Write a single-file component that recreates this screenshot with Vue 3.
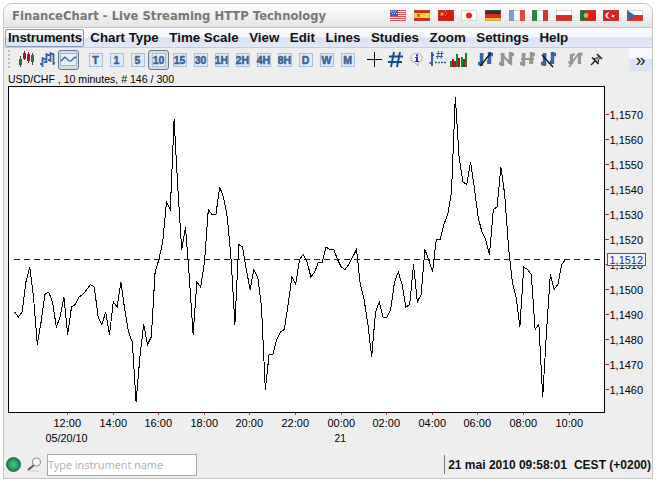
<template>
  <div class="window">
    <header class="title-bar">
      <h1>FinanceChart - Live Streaming HTTP Technology</h1>
      <div class="flags">
        <svg v-for="flag in flags" :key="flag.name" class="flag" width="16" height="11" viewBox="0 0 16 11">
          <rect v-for="(r, i) in flag.rects" :key="i" :x="r[0]" :y="r[1]" :width="r[2]" :height="r[3]" :fill="r[4]" />
          <circle v-if="flag.dot" :cx="flag.dot[0]" :cy="flag.dot[1]" :r="flag.dot[2]" :fill="flag.dot[3]" />
          <path v-if="flag.path" :d="flag.path[0]" :fill="flag.path[1]" />
          <rect x="0.5" y="0.5" width="15" height="10" fill="none" stroke="#777" stroke-opacity="0.3" />
        </svg>
      </div>
    </header>

    <nav class="menu">
      <span v-for="(item, i) in menu" :key="item" class="menu-item" :class="{ active: i === 0 }">{{ item }}</span>
    </nav>

    <div class="toolbar">
      <div class="grip"></div>
      <div class="group">
        <span class="tool">
          <svg width="17" height="17" viewBox="0 0 17 17">
            <path d="M2.5 5v11M14.5 2v12" stroke="#444" />
            <path d="M6.5 0v9M10.5 1v11" stroke="#533" />
            <rect x="1" y="8" width="3" height="6" fill="#1d7a2c" />
            <rect x="5" y="2" width="3" height="6" fill="#9c1c28" />
            <rect x="9" y="3" width="3" height="7" fill="#9c1c28" />
            <rect x="13" y="4" width="3" height="7" fill="#1d7a2c" />
          </svg>
        </span>
        <span class="tool">
          <svg width="17" height="17" viewBox="0 0 17 17" fill="none" stroke="#3f65a5" stroke-width="1.8">
            <path d="M3.5 6v10M7.5 2v10M11.5 1v10M14.5 3v11M1 13h2M3 8h4M5 11h3M7 4h4M9 9h3M11 3h4M14 12h2" />
          </svg>
        </span>
        <span class="tool pressed">
          <svg width="17" height="13" viewBox="0 0 17 13" fill="none">
            <rect x="0.5" y="0.5" width="16" height="12" fill="#e5effa" stroke="#9bb7d8" />
            <path d="M1 8l4-4 4 4 2 0 4-4 1 1" stroke="#36588c" stroke-width="1.2" />
          </svg>
        </span>
      </div>
      <div class="group">
        <span v-for="p in periods" :key="p" class="tool" :class="{ pressed: p === '10' }">
          <span class="period">{{ p }}</span>
        </span>
      </div>
      <div class="group">
        <span class="tool">
          <svg width="17" height="17" viewBox="0 0 17 17">
            <path d="M8.5 1v15M1 8.5h15" stroke="#000" />
          </svg>
        </span>
        <span class="tool">
          <svg width="17" height="17" viewBox="0 0 17 17">
            <path d="M7 1L4 16M13 1L10 16M2 5.5h14M1 11h14" stroke="#0d4c94" stroke-width="1.9" />
          </svg>
        </span>
        <span class="tool">
          <svg width="15" height="15" viewBox="0 0 15 15">
            <path d="M7.5 1.5c4 0 5.500 2 5.500 4.500S11.500 10 9.500 10.500L9 14l-3-3.500C3.500 10 2 8.500 2 6s1.500-4.500 5.500-4.500z" fill="#f5f5fa" stroke="#aaa" />
            <path d="M7 2.500h2v2H7zM6 5h3v4h1v1H6V9h1V6H6z" fill="#2b2bd0" />
          </svg>
        </span>
        <span class="tool">
          <svg width="17" height="17" viewBox="0 0 17 17" fill="none">
            <path d="M3 1v14M0.5 12h2.500M3 4h2" stroke="#3860a4" stroke-width="2" />
            <path d="M9.5 0L8.5 8M13 0L12 8M7.5 2.500h7M7 5.500h7" stroke="#3860a4" />
            <path d="M6 11.500h11" stroke="#3860a4" stroke-width="1.5" stroke-dasharray="2 1" />
          </svg>
        </span>
        <span class="tool">
          <svg width="17" height="15" viewBox="0 0 17 15">
            <path d="M0 9h2v6H0zM6 2h2v13H6zM11 5h2v10h-2zM15 1h2v14h-2z" fill="#16851f" />
            <path d="M2 7h2v8H2zM4 9h2v6H4zM8 6h2v9H8zM13 7h2v8h-2z" fill="#a31822" />
          </svg>
        </span>
      </div>
      <div class="group">
        <span v-for="(icon, i) in lineTools" :key="i" class="tool">
          <svg width="17" height="17" viewBox="0 0 17 17" fill="none">
            <path d="M4.500 2v13M12.500 1v12M1 12.500h3M4.500 4h2M10 11h2.500M12.500 3.500h3.500" :stroke="icon.color" stroke-width="3.400" />
            <path :d="icon.line" :stroke="icon.lineColor" :stroke-width="icon.weight" />
          </svg>
        </span>
      </div>
      <div class="group">
        <span class="tool">
          <svg width="17" height="17" viewBox="0 0 17 17" fill="none" stroke="#969696">
            <path d="M4.500 3v10M12.500 2v11M1.500 11.500h3M12.500 3h3" stroke-width="3.200" />
            <path d="M2 16L12 2M5 3.500h3" stroke-width="1.800" />
          </svg>
        </span>
        <span class="tool">
          <svg width="13" height="13" viewBox="0 0 13 13">
            <path d="M1 12l4-4M2 4.500l6.500 6.500M7 1l5 5" stroke="#222" stroke-width="1.500" />
            <path d="M3.500 5.500l4-0.500 1-2 2 2-2 1.500-0.500 3.500z" fill="#bbb" stroke="#222" />
          </svg>
        </span>
      </div>
      <span class="more">»</span>
    </div>

    <!-- Drawn in window coordinates: the view box starts at the panel corner -->
    <svg class="chart" width="648" height="380" viewBox="4 71 648 380">
      <text x="8" y="83" class="label" textLength="166" lengthAdjust="spacingAndGlyphs">USD/CHF , 10 minutes, # 146 / 300</text>
      <rect x="8.5" y="86.5" width="596" height="326" fill="#fff" stroke="#000" />

      <g class="y-axis">
        <template v-for="tick in yTicks" :key="tick.label">
          <line x1="605" :y1="tick.y" x2="609" :y2="tick.y" stroke="#b03038" />
          <text x="609.5" :y="tick.y + 4.5" class="label" textLength="33.5" lengthAdjust="spacingAndGlyphs">{{ tick.label }}</text>
        </template>
      </g>

      <g class="x-axis">
        <template v-for="tick in xTicks" :key="tick.label">
          <line :x1="tick.x" y1="413" :x2="tick.x" y2="415" stroke="#b03038" />
          <text :x="tick.x - 14" y="427" class="label" textLength="27.5" lengthAdjust="spacingAndGlyphs">{{ tick.label }}</text>
        </template>
        <text x="45.5" y="442" class="label" textLength="42" lengthAdjust="spacingAndGlyphs">05/20/10</text>
        <text x="334.5" y="442" class="label" textLength="11.5" lengthAdjust="spacingAndGlyphs">21</text>
      </g>

      <polyline :points="linePoints" fill="none" stroke="#000" shape-rendering="crispEdges" />
      <line x1="14" y1="259.5" x2="601" y2="259.5" stroke="#10109c" stroke-dasharray="6 4" />
      <rect x="607.5" y="253.5" width="38" height="12" fill="#f4f4f6" stroke="#d02830" />
      <text x="609.5" y="264" class="label current" textLength="33.5" lengthAdjust="spacingAndGlyphs">1,1512</text>
    </svg>

    <footer class="status">
      <svg class="led" width="15" height="15" viewBox="0 0 15 15">
        <defs>
          <radialGradient id="led">
            <stop offset="0" stop-color="#4cc78a" />
            <stop offset="0.7" stop-color="#259a61" />
            <stop offset="1" stop-color="#126b41" />
          </radialGradient>
        </defs>
        <circle cx="7.5" cy="7.5" r="7" fill="url(#led)" stroke="#176944" stroke-width="0.8" />
      </svg>
      <svg class="search" width="15" height="15" viewBox="0 0 15 15">
        <path d="M2 14h10" stroke="#ccc" />
        <path d="M1 13l6-5" stroke="#555" stroke-width="2" />
        <circle cx="9.5" cy="5" r="4" fill="#f7f7f7" stroke="#999" stroke-width="1.2" />
      </svg>
      <input type="text" placeholder="Type instrument name" />
      <div class="clock"><span>21 mai 2010 09:58:01</span><span>CEST (+0200)</span></div>
    </footer>
  </div>
</template>

<script setup>
import { computed } from 'vue'

const menu = ['Instruments', 'Chart Type', 'Time Scale', 'View', 'Edit', 'Lines', 'Studies', 'Zoom', 'Settings', 'Help']
const periods = ['T', '1', '5', '10', '15', '30', '1H', '2H', '4H', '8H', 'D', 'W', 'M']

// rects: [x, y, width, height, fill], dot: [cx, cy, r, fill]
const flags = [
  {
    name: 'us',
    rects: [[0, 0, 16, 11, '#fff'], ...[0, 2, 4, 6, 8, 10].map(y => [0, y, 16, 1, '#e04848']), [0, 0, 8, 6, '#4263b0']],
    path: ['M1 1h1v1H1zM3 1h1v1H3zM5 1h1v1H5zM2 3h1v1H2zM4 3h1v1H4zM6 3h1v1H6z', '#c5d0ee']
  },
  { name: 'es', rects: [[0, 0, 16, 11, '#d82818'], [0, 3, 16, 5, '#ffd42c'], [3, 4, 3, 3, '#c9702a']] },
  { name: 'cn', rects: [[0, 0, 16, 11, '#d51b12'], [7, 1, 1, 1, '#f4b030'], [8, 3, 1, 1, '#f4b030'], [7, 5, 1, 1, '#f4b030']], dot: [4, 4, 1.7, '#f4a82c'] },
  { name: 'jp', rects: [[0, 0, 16, 11, '#fff']], dot: [8, 5.5, 3, '#e02818'] },
  { name: 'de', rects: [[0, 0, 16, 4, '#333'], [0, 4, 16, 4, '#d82c1c'], [0, 8, 16, 3, '#f5c232']] },
  { name: 'fr', rects: [[0, 0, 5, 11, '#7d9bd8'], [5, 0, 6, 11, '#fff'], [11, 0, 5, 11, '#e34840']] },
  { name: 'it', rects: [[0, 0, 5, 11, '#23883b'], [5, 0, 6, 11, '#fff'], [11, 0, 5, 11, '#dc3028']] },
  { name: 'pl', rects: [[0, 0, 16, 6, '#fff'], [0, 5, 16, 6, '#e02828']] },
  { name: 'pt', rects: [[0, 0, 16, 11, '#e01e18'], [0, 0, 6, 11, '#177732']], dot: [6, 5.5, 2.4, '#d9ad43'] },
  { name: 'tr', rects: [[0, 0, 16, 11, '#e01e22']], path: ['M7 3a3 3 0 1 0 0 5a2 2 0 1 1 0-5zM9 4l1 1h2l-1 1v2l-1-1-2 0 1-1z', '#fff'] },
  { name: 'cz', rects: [[0, 0, 16, 6, '#fff'], [0, 5, 16, 6, '#e22d28']], path: ['M0 0L8 5.5L0 11z', '#3c64a8'] }
]

const lineTools = [
  { color: '#3a62a8', line: 'M3 15L14 2', lineColor: '#111', weight: 1.3 },
  { color: '#969696', line: 'M3 3L14 14', lineColor: '#969696', weight: 2 },
  { color: '#969696', line: 'M2 8h13', lineColor: '#969696', weight: 2 },
  { color: '#3a62a8', line: 'M2 4L13 16', lineColor: '#111', weight: 1.3 }
]

// Closing prices in pips, 1512 = 1,1512
const prices = [
  1491, 1489, 1491, 1503, 1509, 1497, 1478, 1487, 1498, 1499,
  1495, 1485, 1489, 1497, 1482, 1493, 1494, 1497, 1498, 1500,
  1502, 1501, 1489, 1486, 1491, 1482, 1495, 1493, 1503, 1492,
  1483, 1479, 1455, 1473, 1486, 1478, 1481, 1507, 1512, 1519,
  1535, 1532, 1568, 1540, 1516, 1525, 1505, 1482, 1503, 1501,
  1511, 1532, 1530, 1530, 1541, 1537, 1529, 1512, 1486, 1518,
  1517, 1508, 1500, 1508, 1505, 1493, 1460, 1474, 1474, 1480,
  1483, 1484, 1494, 1505, 1502, 1512, 1514, 1511, 1505, 1507,
  1511, 1511, 1517, 1516, 1516, 1512, 1509, 1508, 1510, 1513,
  1516, 1502, 1496, 1486, 1473, 1491, 1495, 1489, 1489, 1492,
  1503, 1507, 1502, 1493, 1494, 1510, 1495, 1498, 1516, 1512,
  1507, 1520, 1520, 1526, 1530, 1539, 1577, 1553, 1543, 1542,
  1551, 1541, 1529, 1523, 1520, 1514, 1532, 1533, 1549, 1538,
  1517, 1503, 1497, 1485, 1509, 1508, 1506, 1484, 1486, 1457,
  1483, 1506, 1500, 1502, 1510, 1512
]

const priceToY = price => 259.5 - (price - 1512) * 2.5

const linePoints = computed(() =>
  prices.map((price, i) => `${(14.5 + i * 3.8).toFixed(1)},${priceToY(price)}`).join(' ')
)

const yTicks = Array.from({ length: 12 }, (_, i) => {
  const price = 1570 - i * 10
  return { label: `1,${price}`, y: Math.floor(priceToY(price)) + 0.5 }
})

const xTicks = ['12:00', '14:00', '16:00', '18:00', '20:00', '22:00', '00:00', '02:00', '04:00', '06:00', '08:00', '10:00']
  .map((label, i) => ({ label, x: Math.floor(67.4 + i * 45.6) + 0.5 }))
</script>

<style>
body {
  background: #fff;
}
</style>

<style scoped>
.window {
  box-sizing: border-box;
  width: 650px;
  height: 476px;
  margin: 3px;
  display: flex;
  flex-direction: column;
  overflow: hidden;
  background: #eee;
  border: 1px solid #c6c6c6;
  border-radius: 9px 9px 0 0;
  font-family: "Liberation Sans", Arial, sans-serif;
}

.title-bar {
  box-sizing: border-box;
  height: 24px;
  flex: none;
  display: flex;
  align-items: center;
  justify-content: space-between;
  padding: 0 9px 0 8px;
  background: linear-gradient(#fff, #e4e4e4);
  border-bottom: 1px solid #c9c9c9;
}

h1 {
  margin: 0;
  font: bold 11.6px "DejaVu Sans", Verdana, sans-serif;
  color: #777;
  white-space: nowrap;
}

.flags {
  display: flex;
  gap: 7.7px;
}

.flag {
  display: block;
}

.menu {
  box-sizing: border-box;
  height: 20px;
  flex: none;
  display: flex;
  align-items: center;
  padding-left: 1px;
  background: linear-gradient(#fff 0%, #f2f5fc 45%, #dae1f2 55%, #e3e9f7 100%);
  border-bottom: 1px solid #ccc;
}

.menu-item {
  box-sizing: border-box;
  height: 18px;
  padding: 0 5.3px;
  font-size: 13.3px;
  line-height: 18px;
  font-weight: bold;
  white-space: nowrap;
  color: #111;
}

.menu-item.active {
  width: 79px;
  padding: 0 2px;
  margin-right: 1px;
  line-height: 16px;
  letter-spacing: -0.2px;
  border: 1px solid #8299bd;
  border-radius: 2px;
}

.toolbar {
  height: 23px;
  flex: none;
  display: flex;
  align-items: center;
  gap: 6px;
  padding-left: 4px;
}

.grip {
  width: 2px;
  height: 20px;
  background: repeating-linear-gradient(#bbb 0 2px, #eee 2px 4px);
}

.group {
  display: flex;
}

.tool {
  box-sizing: border-box;
  width: 21px;
  height: 20px;
  display: flex;
  align-items: center;
  justify-content: center;
}

.tool svg {
  display: block;
  flex: none;
}

.pressed {
  border: 1px solid #6d7683;
  border-radius: 3px;
  background: #d7dbe2;
}

.period {
  box-sizing: border-box;
  width: 14px;
  height: 14px;
  border: 1px solid #a5c0df;
  background: #dfebf8;
  display: flex;
  align-items: center;
  justify-content: center;
  flex: none;
  font-size: 10.5px;
  font-weight: bold;
  line-height: 12px;
  color: #40618f;
  -webkit-text-stroke: 0.5px #40618f;
}

.more {
  width: 23px;
  height: 23px;
  margin-left: auto;
  text-align: center;
  font-size: 18px;
  line-height: 25px;
  color: #222;
  background: linear-gradient(#f6f8fd 50%, #dce3f4 50%);
}

.chart {
  display: block;
  flex: none;
}

.label {
  font-size: 11.5px;
  fill: #000;
}

.current {
  fill: #2424b8;
}

.status {
  flex: 1;
  display: flex;
  align-items: center;
  padding: 0 1px 0 2px;
}

.search {
  margin-left: 6px;
}

input {
  box-sizing: border-box;
  width: 150px;
  height: 22px;
  margin-left: 5px;
  padding: 0;
  border: 1px solid #aaa;
  background: #fff;
  font: 11px "Noto Sans", Tahoma, sans-serif;
  letter-spacing: -0.1px;
}

input::placeholder {
  color: #b5b5b5;
  opacity: 1;
}

.clock {
  height: 19px;
  margin-left: auto;
  padding-left: 3px;
  display: flex;
  align-items: center;
  gap: 7px;
  border-left: 1px solid #777;
  font-size: 12px;
  font-weight: bold;
  white-space: nowrap;
  color: #111;
}
</style>
